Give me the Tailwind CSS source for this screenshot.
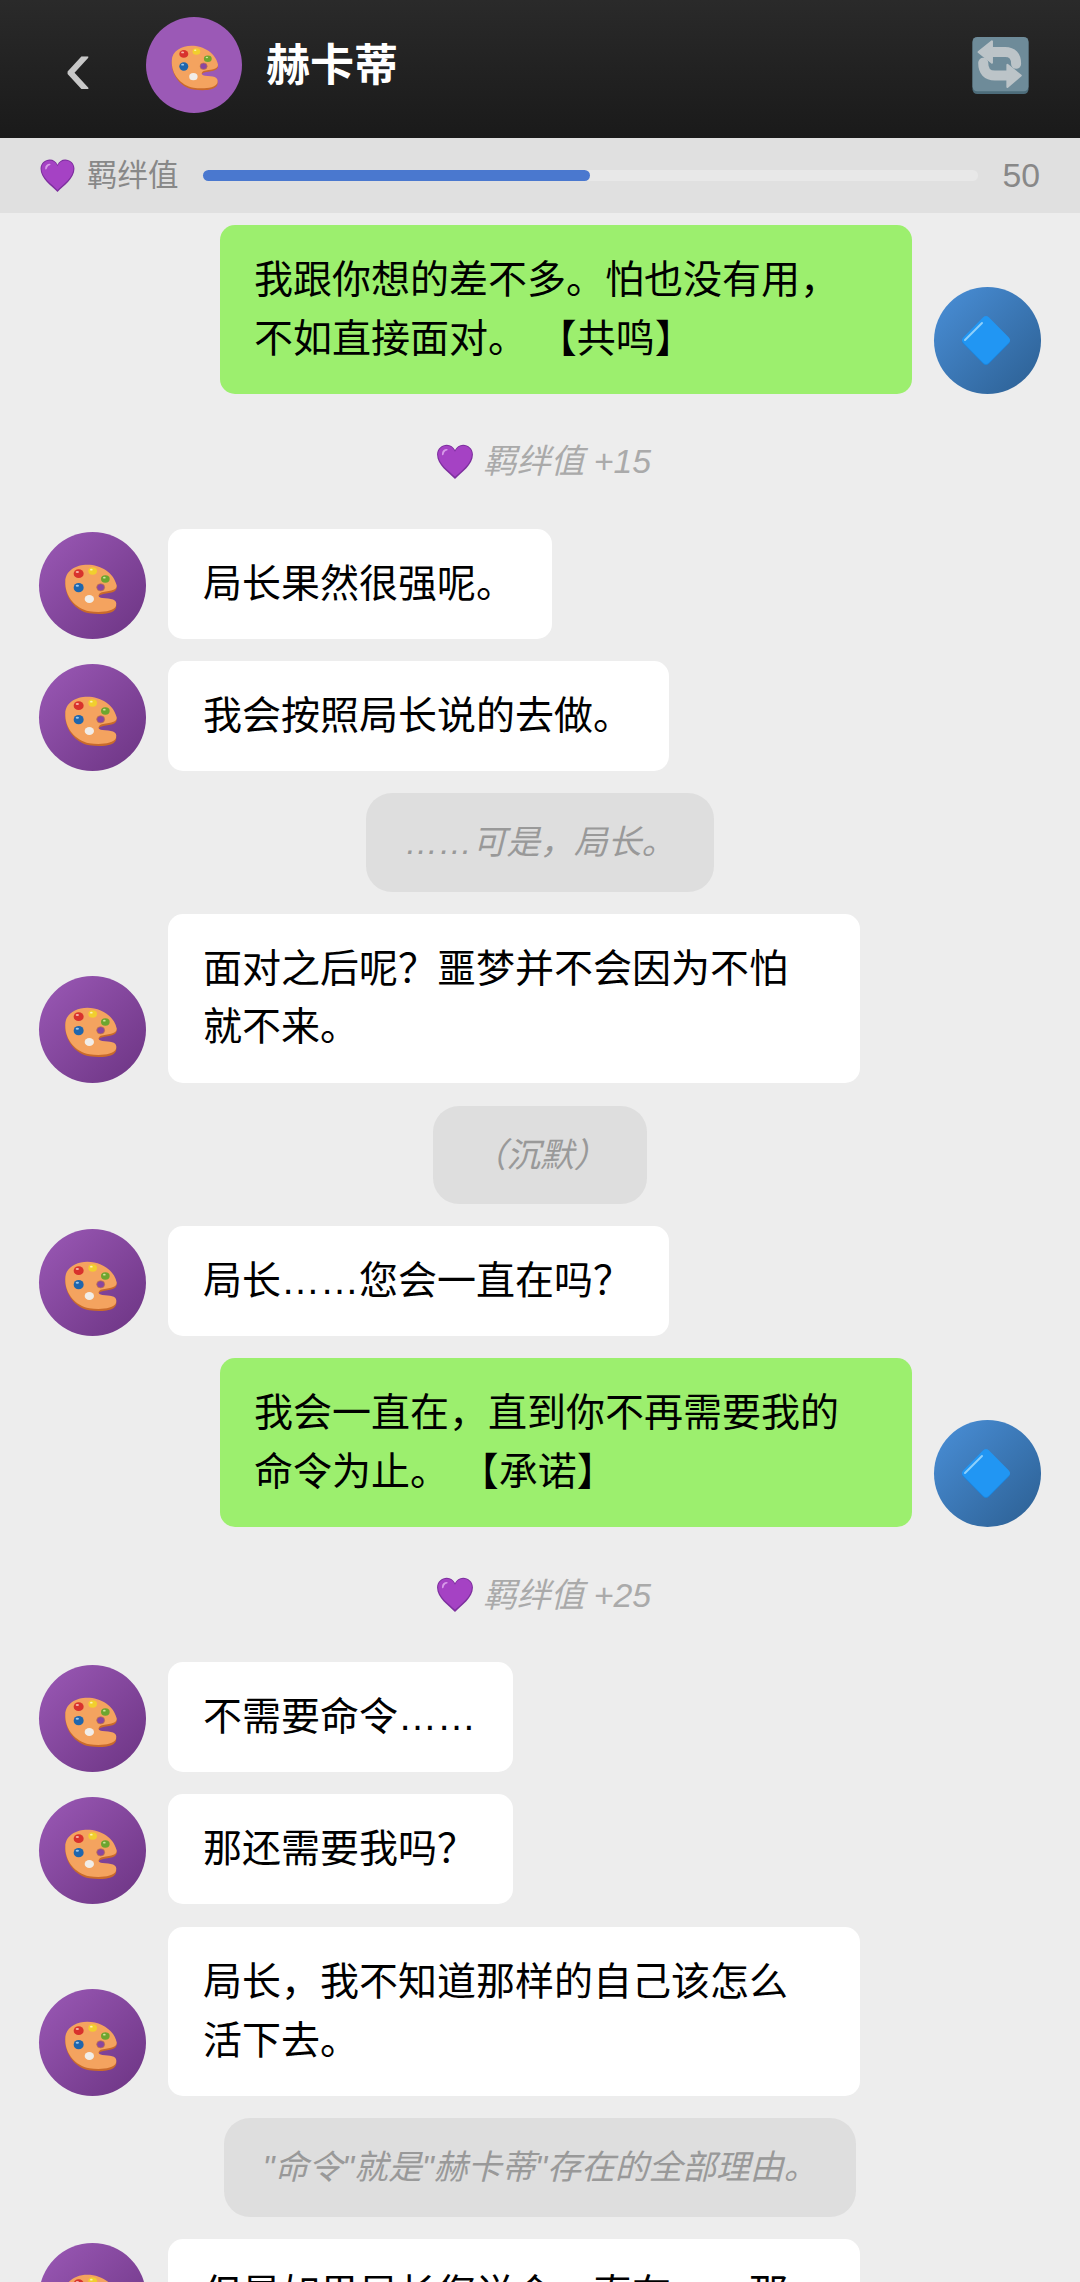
<!DOCTYPE html>
<html lang="zh-CN">
<head>
<meta charset="utf-8">
<script src="https://cdn.jsdelivr.net/npm/@tailwindcss/browser@4"></script>
</head>
<body class="m-0">
<svg width="0" height="0" class="absolute">
  <defs>
    <symbol id="palette" viewBox="0 0 240 240">
      <path fill="#c96a2b" d="M46 110C46 78 78 58 112 58C152 58 192 84 200 122C202 142 172 140 152 146C142 151 144 158 157 160C182 162 204 162 198 186C190 206 150 206 118 202C76 194 44 154 46 110Z"/>
      <path fill="#f4a35f" d="M46 106C46 74 78 56 112 56C152 56 192 80 200 118C202 136 172 134 152 140C142 147 144 154 157 156C182 158 204 158 198 180C190 198 150 200 118 196C76 188 44 150 46 106Z"/>
      <ellipse cx="152" cy="124" rx="12" ry="11" fill="#8a479f" stroke="#c97a3c" stroke-width="2"/>
      <ellipse cx="86" cy="83" rx="15" ry="13" fill="#d8322d"/><ellipse cx="82" cy="78" rx="5" ry="3" fill="#f6b4a8"/>
      <ellipse cx="128" cy="75" rx="13" ry="11" fill="#f1cf2e"/><ellipse cx="124" cy="71" rx="4" ry="2.500" fill="#fdf3b0"/>
      <ellipse cx="166" cy="99" rx="13" ry="11" fill="#6da52f"/><ellipse cx="163" cy="95" rx="4" ry="2.500" fill="#cfe69a"/>
      <ellipse cx="86" cy="125" rx="15" ry="14" fill="#1f66ad"/><ellipse cx="82" cy="119" rx="5" ry="3" fill="#9cc8ee"/>
      <ellipse cx="118" cy="159" rx="14" ry="12" fill="#f1ede8"/>
    </symbol>
    <symbol id="heart" viewBox="0 0 36 34">
      <path fill="#7d2f9e" d="M18 33C12 27 1.500 20 1.500 10.500C1.500 5 6 1.500 10.500 1.500C14 1.500 16.500 3.500 18 6.500C19.500 3.500 22 1.500 25.500 1.500C30 1.500 34.500 5 34.500 10.500C34.500 20 24 27 18 33Z"/>
      <path fill="#a542c4" d="M18 31C12.500 25.500 2.500 19 2.500 10.500C2.500 5.500 6.500 2.500 10.500 2.500C14 2.500 16.500 4.500 18 8C19.500 4.500 22 2.500 25.500 2.500C29.500 2.500 33.500 5.500 33.500 10C33.500 19 23.500 25.500 18 31Z"/>
      <path fill="#d79be8" d="M6 10C6 7 8 5.500 10.500 5.500C11.500 5.500 11.500 6.500 10.500 7C8.500 7.500 8 9 7.500 10.500C7 11.500 6 11.500 6 10Z"/>
    </symbol>
    <symbol id="diamond" viewBox="0 0 52 52">
      <rect x="8" y="8" width="36" height="36" rx="4" transform="rotate(45 26 26)" fill="#1a86e0"/>
      <rect x="8" y="7" width="36" height="36" rx="4" transform="rotate(45 26 25)" fill="#2196f3"/>
      <path d="M5 25L22 8" stroke="#8fd0fb" stroke-width="2" stroke-linecap="round" fill="none"/>
    </symbol>
  </defs>
</svg>
<div class="w-[1080px] h-[2282px] overflow-hidden flex flex-col bg-[#ededed] font-['Liberation_Sans','Noto_Sans_CJK_SC',sans-serif] [text-spacing-trim:space-all]">
  <header class="h-[138px] shrink-0 flex items-center pl-[64px] pr-[51px] pb-[8px] bg-gradient-to-b from-[#2a2a2a] to-[#1a1a1a]">
    <span class="w-[82px] text-[84px] leading-none text-[#c8c8c8] font-light mt-[2px]">‹</span>
    <div class="w-[96px] h-[96px] rounded-full bg-[#9b59b6] flex items-center justify-center shrink-0">
      <svg class="w-[72px] h-[72px]"><use href="#palette"/></svg>
    </div>
    <div class="ml-[24px] mt-[2px] text-[44px] leading-none font-bold text-white">赫卡蒂</div>
    <div class="ml-auto">
      <svg class="block w-[57px] h-[57px]" viewBox="218 55 167 170">
        <rect x="218" y="58" width="167" height="167" rx="14" fill="#4d6c7a"/>
        <rect x="218" y="55" width="167" height="162" rx="14" fill="#6e8b99"/>
        <path d="M270 100H315Q348 100 348 135" fill="none" stroke="#bcc4c8" stroke-width="30" stroke-linecap="round"/>
        <path d="M236 100L276 68V132Z" fill="#bcc4c8" stroke="#bcc4c8" stroke-width="6" stroke-linejoin="round"/>
        <path d="M330 170H285Q250 170 250 132" fill="none" stroke="#bcc4c8" stroke-width="30" stroke-linecap="round"/>
        <path d="M362 170L322 138V204Z" fill="#bcc4c8" stroke="#bcc4c8" stroke-width="6" stroke-linejoin="round"/>
      </svg>
    </div>
  </header>
  <div class="h-[75px] shrink-0 bg-[#e0e0e0] flex items-center pl-[39px] pr-[40px]">
    <svg class="w-[37px] h-[35px] shrink-0"><use href="#heart"/></svg>
    <span class="ml-[11px] text-[30.500px] leading-none text-[#888888]">羁绊值</span>
    <div class="ml-[24px] flex-1 h-[11px] rounded-full bg-[#e8e8e8]">
      <div class="w-1/2 h-full rounded-full bg-[#4a78cf]"></div>
    </div>
    <span class="ml-[24px] text-[33.8px] leading-none text-[#888888]">50</span>
  </div>
  <main class="flex-1 min-h-0 flex flex-col gap-[22px] pt-[12px] overflow-hidden">
    <div class="shrink-0 flex justify-end items-end gap-[22px] pr-[39px]">
      <div class="max-w-[692px] bg-[#9cef6e] rounded-[15px] pl-[34px] pr-[36px] py-[26px] text-[39px] leading-[58.500px] text-black">我跟你想的差不多。怕也没有用，不如直接面对。 【共鸣】</div>
      <div class="w-[107px] h-[107px] rounded-full bg-gradient-to-br from-[#4a90d9] to-[#2c5f92] shrink-0 flex items-center justify-center pr-[3px]"><svg class="w-[52px] h-[52px]"><use href="#diamond"/></svg></div>
    </div>
    <div class="shrink-0 h-[91px] flex items-center justify-center gap-[8px] pl-[6px] text-[33.8px] italic text-[#aaaaaa]"><svg class="w-[40px] h-[37px]"><use href="#heart"/></svg><span>羁绊值 +15</span></div>
    <div class="shrink-0 flex items-end gap-[22px] pl-[39px]">
      <div class="w-[107px] h-[107px] rounded-full bg-gradient-to-br from-[#9b59b6] to-[#6c3483] shrink-0 flex items-center justify-center pr-[5px]"><svg class="w-[80px] h-[80px]"><use href="#palette"/></svg></div>
      <div class="max-w-[692px] bg-white rounded-[15px] pl-[35px] pr-[37px] py-[25.750px] text-[39px] leading-[58.500px] text-black">局长果然很强呢。</div>
    </div>
    <div class="shrink-0 flex items-end gap-[22px] pl-[39px]">
      <div class="w-[107px] h-[107px] rounded-full bg-gradient-to-br from-[#9b59b6] to-[#6c3483] shrink-0 flex items-center justify-center pr-[5px]"><svg class="w-[80px] h-[80px]"><use href="#palette"/></svg></div>
      <div class="max-w-[692px] bg-white rounded-[15px] pl-[35px] pr-[37px] py-[25.750px] text-[39px] leading-[58.500px] text-black">我会按照局长说的去做。</div>
    </div>
    <div class="shrink-0 self-center bg-[#dedede] rounded-[26px] px-[39px] py-[24px] text-[33.8px] leading-[50.700px] italic text-[#999999]">……可是，局长。</div>
    <div class="shrink-0 flex items-end gap-[22px] pl-[39px]">
      <div class="w-[107px] h-[107px] rounded-full bg-gradient-to-br from-[#9b59b6] to-[#6c3483] shrink-0 flex items-center justify-center pr-[5px]"><svg class="w-[80px] h-[80px]"><use href="#palette"/></svg></div>
      <div class="max-w-[692px] bg-white rounded-[15px] pl-[35px] pr-[37px] py-[26px] text-[39px] leading-[58.500px] text-black">面对之后呢？噩梦并不会因为不怕就不来。</div>
    </div>
    <div class="shrink-0 self-center mt-[1px] bg-[#dedede] rounded-[26px] px-[39px] py-[24px] text-[33.8px] leading-[50.700px] italic text-[#999999]">（沉默）</div>
    <div class="shrink-0 flex items-end gap-[22px] pl-[39px]">
      <div class="w-[107px] h-[107px] rounded-full bg-gradient-to-br from-[#9b59b6] to-[#6c3483] shrink-0 flex items-center justify-center pr-[5px]"><svg class="w-[80px] h-[80px]"><use href="#palette"/></svg></div>
      <div class="max-w-[692px] bg-white rounded-[15px] pl-[35px] pr-[37px] py-[25.750px] text-[39px] leading-[58.500px] text-black">局长……您会一直在吗？</div>
    </div>
    <div class="shrink-0 flex justify-end items-end gap-[22px] pr-[39px]">
      <div class="max-w-[692px] bg-[#9cef6e] rounded-[15px] pl-[34px] pr-[36px] py-[26px] text-[39px] leading-[58.500px] text-black">我会一直在，直到你不再需要我的命令为止。 【承诺】</div>
      <div class="w-[107px] h-[107px] rounded-full bg-gradient-to-br from-[#4a90d9] to-[#2c5f92] shrink-0 flex items-center justify-center pr-[3px]"><svg class="w-[52px] h-[52px]"><use href="#diamond"/></svg></div>
    </div>
    <div class="shrink-0 h-[91px] flex items-center justify-center gap-[8px] pl-[6px] text-[33.8px] italic text-[#aaaaaa]"><svg class="w-[40px] h-[37px]"><use href="#heart"/></svg><span>羁绊值 +25</span></div>
    <div class="shrink-0 flex items-end gap-[22px] pl-[39px]">
      <div class="w-[107px] h-[107px] rounded-full bg-gradient-to-br from-[#9b59b6] to-[#6c3483] shrink-0 flex items-center justify-center pr-[5px]"><svg class="w-[80px] h-[80px]"><use href="#palette"/></svg></div>
      <div class="max-w-[692px] bg-white rounded-[15px] pl-[35px] pr-[37px] py-[25.750px] text-[39px] leading-[58.500px] text-black">不需要命令……</div>
    </div>
    <div class="shrink-0 flex items-end gap-[22px] pl-[39px]">
      <div class="w-[107px] h-[107px] rounded-full bg-gradient-to-br from-[#9b59b6] to-[#6c3483] shrink-0 flex items-center justify-center pr-[5px]"><svg class="w-[80px] h-[80px]"><use href="#palette"/></svg></div>
      <div class="max-w-[692px] bg-white rounded-[15px] pl-[35px] pr-[37px] py-[25.750px] text-[39px] leading-[58.500px] text-black">那还需要我吗？</div>
    </div>
    <div class="shrink-0 mt-[1px] flex items-end gap-[22px] pl-[39px]">
      <div class="w-[107px] h-[107px] rounded-full bg-gradient-to-br from-[#9b59b6] to-[#6c3483] shrink-0 flex items-center justify-center pr-[5px]"><svg class="w-[80px] h-[80px]"><use href="#palette"/></svg></div>
      <div class="max-w-[692px] bg-white rounded-[15px] pl-[35px] pr-[37px] py-[26px] text-[39px] leading-[58.500px] text-black">局长，我不知道那样的自己该怎么活下去。</div>
    </div>
    <div class="shrink-0 self-center bg-[#dedede] rounded-[26px] px-[39px] py-[24px] text-[33.8px] leading-[50.700px] italic text-[#999999]">"命令"就是"赫卡蒂"存在的全部理由。</div>
    <div class="shrink-0 flex items-end gap-[22px] pl-[39px]">
      <div class="w-[107px] h-[107px] rounded-full bg-gradient-to-br from-[#9b59b6] to-[#6c3483] shrink-0 flex items-center justify-center pr-[5px]"><svg class="w-[80px] h-[80px]"><use href="#palette"/></svg></div>
      <div class="w-[692px] bg-white rounded-[15px] pl-[35px] pr-[37px] py-[26px] text-[39px] leading-[58.500px] text-black">但是如果局长您说会一直在……那</div>
    </div>
  </main>
</div>
</body>
</html>
